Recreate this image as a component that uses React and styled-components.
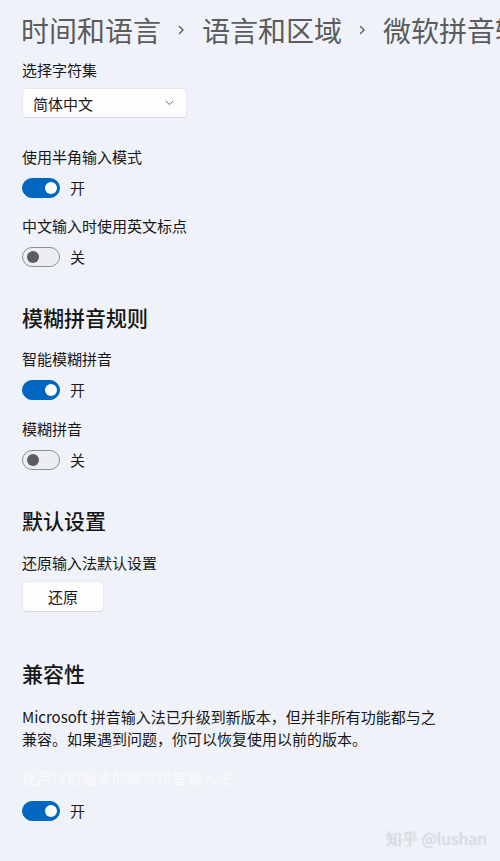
import React, { useState } from 'react';
import styled, { createGlobalStyle } from 'styled-components';

const GlobalStyle = createGlobalStyle`
  html, body {
    margin: 0;
    padding: 0;
    background: #eff3f9;
    overflow: hidden;
  }
  body {
    font-family: "Noto Sans CJK SC", "Noto Sans", sans-serif;
    color: #1b1b1b;
  }
`;

const Page = styled.div`
  position: relative;
  width: 500px;
  height: 861px;
  padding: 12px 0 0 22px;
  box-sizing: border-box;
  display: flex;
  flex-direction: column;
  align-items: flex-start;
  overflow: hidden;
`;

const Breadcrumb = styled.div`
  display: flex;
  align-items: center;
  white-space: nowrap;
  font-size: 28px;
  line-height: 36px;
  color: #5b5b5b;
  margin-left: -1px;
`;

const Sep = styled.svg`
  width: 9px;
  height: 14px;
  margin: 0 16px;
  flex-shrink: 0;
`;

const Label = styled.div`
  font-size: 15px;
  line-height: 20px;
  color: ${p => (p.faded ? '#f9fafc' : '#161616')};
  margin-top: ${p => p.gap}px;
`;

const Heading = styled.h2`
  margin: ${p => p.gap}px 0 0;
  font-size: 21px;
  line-height: 28px;
  font-weight: 500;
  color: #161616;
`;

const Select = styled.div`
  margin-top: 8px;
  width: 165px;
  height: 30px;
  box-sizing: border-box;
  padding: 0 12px 0 10px;
  display: flex;
  align-items: center;
  justify-content: space-between;
  background: #fdfdfe;
  border: 1px solid #e6e8ec;
  border-bottom-color: #d6d8dc;
  border-radius: 4px;
  font-size: 15px;
`;

const Button = styled.button`
  margin-top: 8px;
  width: 82px;
  height: 31px;
  background: #fdfdfe;
  border: 1px solid #e6e8ec;
  border-bottom-color: #d6d8dc;
  border-radius: 4px;
  font-family: inherit;
  font-size: 15px;
  color: #161616;
  padding: 0;
`;

const ToggleRow = styled.div`
  display: flex;
  align-items: center;
  gap: 10px;
  margin-top: ${p => p.gap}px;
  font-size: 15px;
  line-height: 20px;
  cursor: pointer;
`;

const Track = styled.span`
  position: relative;
  width: 38px;
  height: 20px;
  box-sizing: border-box;
  border-radius: 10px;
  background: ${p => (p.on ? '#0067c0' : '#eceef2')};
  border: 1px solid ${p => (p.on ? '#0067c0' : '#8d8f93')};
`;

const Knob = styled.span`
  position: absolute;
  top: 50%;
  left: ${p => (p.on ? '22px' : '4px')};
  width: 12px;
  height: 12px;
  transform: translateY(-50%);
  border-radius: 50%;
  background: ${p => (p.on ? '#ffffff' : '#5c5d60')};
`;

const Paragraph = styled.p`
  margin: 19px 0 0;
  font-size: 15px;
  line-height: 22px;
  color: #161616;
`;

const Watermark = styled.div`
  position: absolute;
  right: 13px;
  bottom: 12px;
  font-size: 16px;
  line-height: 22px;
  color: #dde1e7;
  text-shadow: 0 0 1px #b9bec6;
`;

const Chevron = () => (
  <Sep viewBox="0 0 9 14">
    <path d="M2.5 3.5 L6 7 L2.5 10.5" fill="none" stroke="#5b5b5b" strokeWidth="1.4" strokeLinecap="round" strokeLinejoin="round" />
  </Sep>
);

const Toggle = ({ initial, gap }) => {
  const [on, setOn] = useState(initial);
  return (
    <ToggleRow gap={gap} onClick={() => setOn(!on)}>
      <Track on={on}>
        <Knob on={on} />
      </Track>
      <span>{on ? '开' : '关'}</span>
    </ToggleRow>
  );
};

const App = () => {
  return (
    <>
      <GlobalStyle />
      <Page>
        <Breadcrumb>
          <span>时间和语言</span>
          <Chevron />
          <span>语言和区域</span>
          <Chevron />
          <span>微软拼音输入法</span>
        </Breadcrumb>

        <Label gap={12}>选择字符集</Label>
        <Select>
          <span>简体中文</span>
          <svg width="9" height="6" viewBox="0 0 9 6">
            <path d="M1 1.2 L4.5 4.6 L8 1.2" fill="none" stroke="#6a6a6a" strokeWidth="1" strokeLinecap="round" />
          </svg>
        </Select>

        <Label gap={29}>使用半角输入模式</Label>
        <Toggle initial={true} gap={11} />
        <Label gap={18}>中文输入时使用英文标点</Label>
        <Toggle initial={false} gap={11} />

        <Heading gap={36}>模糊拼音规则</Heading>
        <Label gap={18}>智能模糊拼音</Label>
        <Toggle initial={true} gap={11} />
        <Label gap={19}>模糊拼音</Label>
        <Toggle initial={false} gap={11} />

        <Heading gap={36}>默认设置</Heading>
        <Label gap={19}>还原输入法默认设置</Label>
        <Button>还原</Button>

        <Heading gap={47}>兼容性</Heading>
        <Paragraph>
          Microsoft 拼音输入法已升级到新版本，但并非所有功能都与之
          <br />
          兼容。如果遇到问题，你可以恢复使用以前的版本。
        </Paragraph>
        <Label gap={18} faded>使用以前版本的微软拼音输入法</Label>
        <Toggle initial={true} gap={13} />

        <Watermark>知乎 @lushan</Watermark>
      </Page>
    </>
  );
};

export default App;
